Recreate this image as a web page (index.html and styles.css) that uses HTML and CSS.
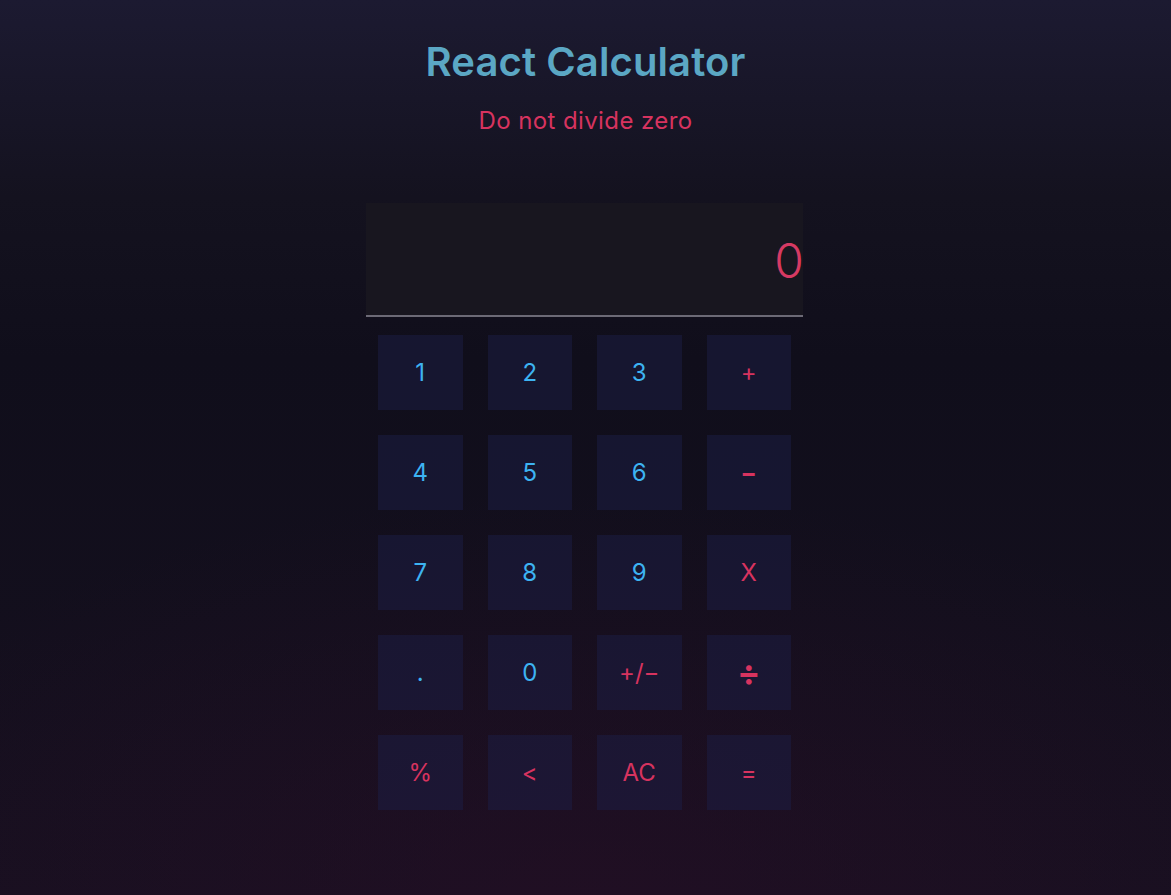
FILE: index.html
```html
<!DOCTYPE html>
<html lang="en">
<head>
<meta charset="utf-8">
<title>React Calculator</title>
<link rel="stylesheet" href="styles.css">
</head>
<body>
<main class="app">
  <h1 class="title">React Calculator</h1>
  <p class="message">Do not divide zero</p>
  <section class="calculator">
    <div class="display"><span class="display-value">0</span></div>
    <div class="keypad">
      <button class="key num">1</button>
      <button class="key num">2</button>
      <button class="key num">3</button>
      <button class="key op">+</button>
      <button class="key num">4</button>
      <button class="key num">5</button>
      <button class="key num">6</button>
      <button class="key op minus">&minus;</button>
      <button class="key num">7</button>
      <button class="key num">8</button>
      <button class="key num">9</button>
      <button class="key op">X</button>
      <button class="key num">.</button>
      <button class="key num">0</button>
      <button class="key op">+/&minus;</button>
      <button class="key op divide">&divide;</button>
      <button class="key op">%</button>
      <button class="key op">&lt;</button>
      <button class="key op">AC</button>
      <button class="key op">=</button>
    </div>
  </section>
</main>
</body>
</html>
```
FILE: styles.css
```css
html, body {
  margin: 0;
  padding: 0;
  height: 100%;
}
body {
  font-family: Inter, "Liberation Sans", Arial, sans-serif;
  background:
    radial-gradient(ellipse 70% 45% at 50% 100%, rgba(40, 14, 38, 0.55), rgba(40, 14, 38, 0) 100%),
    linear-gradient(180deg, #1c1a31 0%, #14121f 22%, #100e1b 40%, #130f1d 70%, #171020 100%);
  min-height: 895px;
}
.app {
  display: flex;
  flex-direction: column;
  align-items: center;
}
.title {
  margin: 39px 0 0;
  font-size: 40px;
  line-height: 46px;
  font-weight: 600;
  letter-spacing: 0.1px;
  color: #5ba7c4;
}
.message {
  margin: 22px 0 0;
  font-size: 24px;
  line-height: 28px;
  letter-spacing: 0.4px;
  color: #d7335f;
}
.calculator {
  margin: 68px 2px 0 0;
  width: 437px;
}
.display {
  height: 112px;
  background: #18161f;
  border-bottom: 2px solid #6c6a76;
  display: flex;
  align-items: center;
  justify-content: flex-end;
}
.display-value {
  font-size: 48px;
  line-height: 50px;
  font-weight: 300;
  color: #d63a63;
  margin-top: 4px;
  margin-right: -1px;
}
.keypad {
  display: grid;
  grid-template-columns: repeat(4, 84.5px);
  grid-auto-rows: 75px;
  column-gap: 25px;
  row-gap: 25px;
  padding: 18px 12px 0;
}
.key {
  border: none;
  margin: 0;
  padding: 0;
  background: rgba(28, 30, 70, 0.5);
  font-family: Inter, "Liberation Sans", Arial, sans-serif;
  font-size: 24px;
  display: flex;
  align-items: center;
  justify-content: center;
}
.num {
  color: #3db3f2;
}
.op {
  color: #d7335f;
}
.minus {
  font-weight: 700;
}
.divide {
  font-size: 34px;
  font-weight: 700;
}
```
